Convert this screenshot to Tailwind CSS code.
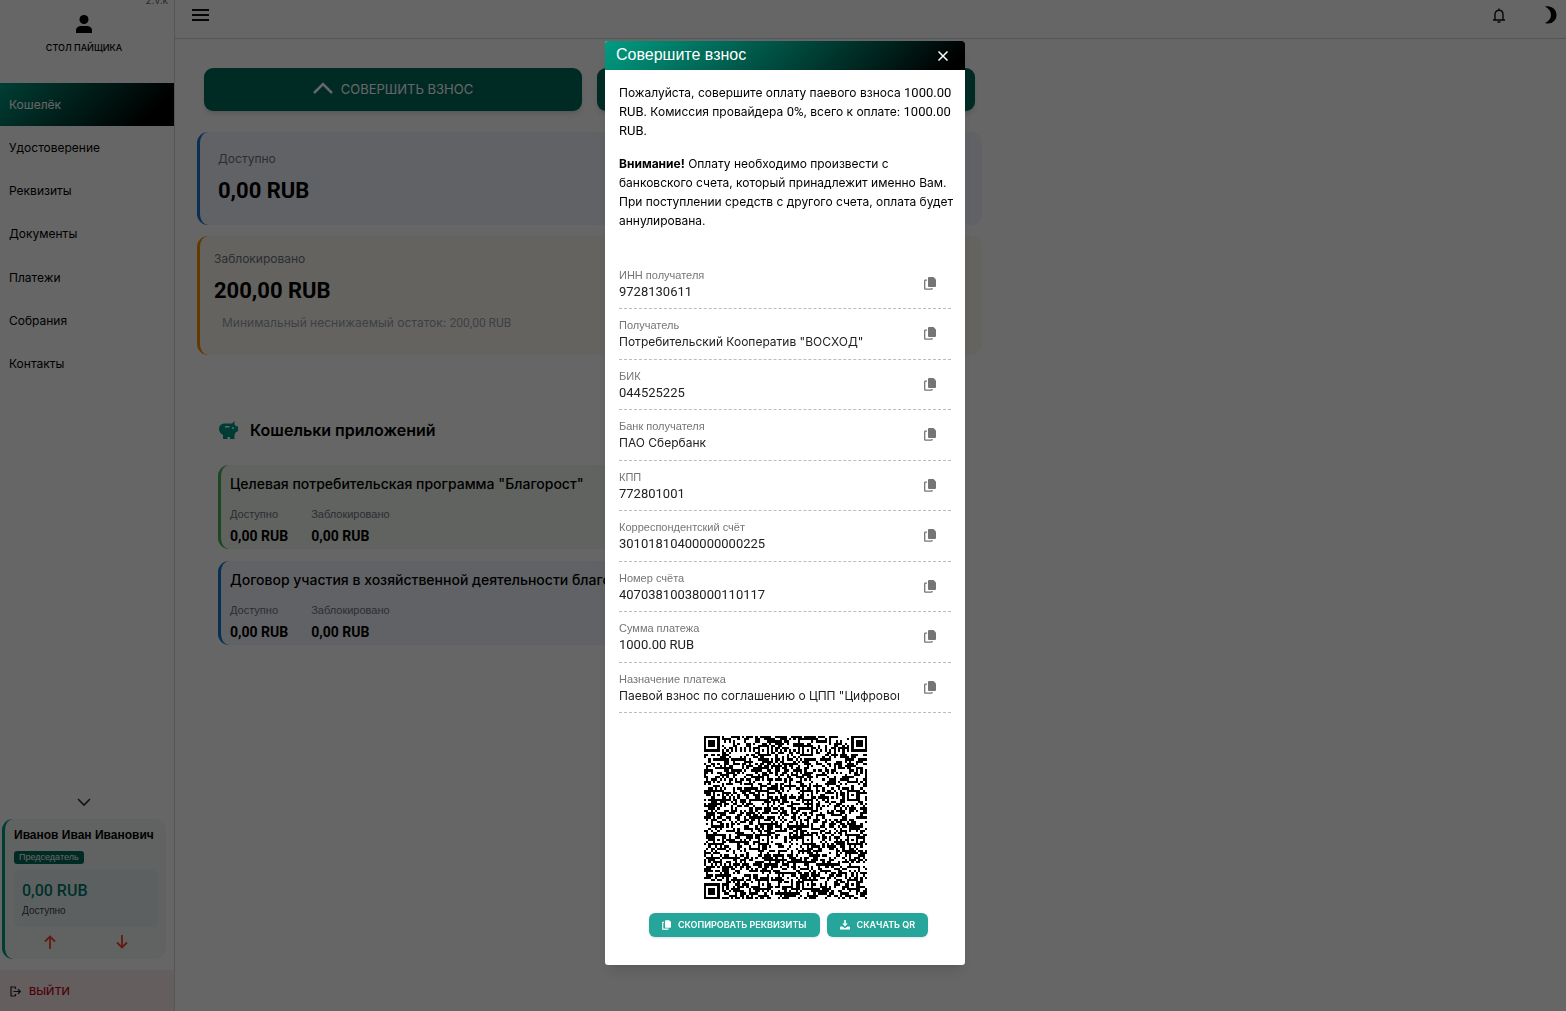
<!DOCTYPE html>
<html lang="ru">

<head>
  <meta charset="UTF-8" />
  <meta name="viewport" content="width=device-width, initial-scale=1.0" />
  <script src="https://cdn.jsdelivr.net/npm/@tailwindcss/browser@4"></script>
  <title>Стол пайщика — Кошелёк</title>
</head>

<body class="font-[Inter,'Liberation_Sans',sans-serif] text-black bg-white">
  <div class="flex h-screen overflow-hidden">
    <!-- Sidebar -->
    <aside class="relative w-[175px] shrink-0 flex flex-col border-r border-gray-300">
      <span class="absolute right-1.5 -top-1.5 text-[10px] leading-3 text-gray-500">2.v.k</span>
      <div class="flex flex-col items-center pt-[15px] h-[83px] pr-1.5">
        <svg viewBox="0 0 16 18" class="w-4 h-[18px]" fill="currentColor">
          <circle cx="8" cy="4.5" r="4.5" />
          <path d="M0 18v-2.5C0 12.500 2.500 11 5 11h6c2.500 0 5 1.500 5 4.500V18z" />
        </svg>
        <h1 class="mt-2 text-[9px] leading-3.5 font-medium">СТОЛ ПАЙЩИКА</h1>
      </div>
      <nav class="flex flex-col text-[12px]">
        <a href="#" class="h-[43px] px-[9px] flex items-center text-white bg-linear-[135deg,#009c82,#000_85%]">Кошелёк</a>
        <a href="#" class="h-[43px] px-[9px] flex items-center">Удостоверение</a>
        <a href="#" class="h-[43px] px-[9px] flex items-center">Реквизиты</a>
        <a href="#" class="h-11 px-[9px] flex items-center">Документы</a>
        <a href="#" class="h-[43px] px-[9px] flex items-center">Платежи</a>
        <a href="#" class="h-[43px] px-[9px] flex items-center">Собрания</a>
        <a href="#" class="h-[43px] px-[9px] flex items-center">Контакты</a>
      </nav>
      <div class="mt-auto flex flex-col">
        <button class="self-center mr-1.5 mb-3" aria-label="Свернуть">
          <svg viewBox="0 0 14 9" class="w-3.5 h-[9px]" fill="none" stroke="#333" stroke-width="1.700">
            <path d="M1 1l6 6 6-6" />
          </svg>
        </button>
        <section class="ml-0.5 mr-2 h-[140px] pl-[9px] pr-2 pt-2 rounded-[11px] border-l-3 border-[#009c82] bg-[#f2f7f6]">
          <h2 class="font-['Liberation_Sans',sans-serif] text-[12px] leading-4 font-bold whitespace-nowrap">Иванов Иван Иванович</h2>
          <span class="block w-fit mt-2 px-[5px] rounded-[3px] bg-[#006b5a] font-['Liberation_Sans',sans-serif] text-white text-[9px] leading-[13px]">Председатель</span>
          <div class="mt-1.5 h-[57px] px-2 pt-[11px] rounded-md bg-[#e6f1f1]">
            <p class="font-[Roboto,sans-serif] text-[16px] leading-5 font-medium text-[#00796b]">0,00 RUB</p>
            <p class="mt-0.5 font-['Liberation_Sans',sans-serif] text-[10px] leading-4 text-gray-700">Доступно</p>
          </div>
          <div class="flex justify-around mt-2 text-[#f2452f]">
            <button aria-label="Внести">
              <svg viewBox="0 0 12 14" class="w-3 h-3.5" fill="none" stroke="currentColor" stroke-width="1.800">
                <path d="M6 14V1.500M1 6.500l5-5 5 5" />
              </svg>
            </button>
            <button aria-label="Вывести">
              <svg viewBox="0 0 12 14" class="w-3 h-3.5" fill="none" stroke="currentColor" stroke-width="1.800">
                <path d="M6 0v12.500M1 7.500l5 5 5-5" />
              </svg>
            </button>
          </div>
        </section>
        <button class="mt-[11px] h-[41px] px-2.5 pt-0.5 flex items-center gap-2 bg-[#faebea] text-[#c10015] text-[11px] font-medium">
          <svg viewBox="0 0 11 11" class="w-[11px] h-[11px]" fill="none" stroke="#222" stroke-width="1.200">
            <path d="M5.500 1H1v9h4.500M5.500 3V1M5.500 8v2M3.500 5.500H10M8 3.200l2.300 2.300L8 7.800" />
          </svg>
          ВЫЙТИ
        </button>
      </div>
    </aside>

    <div class="flex-1 min-w-0">
      <header class="h-[39px] pl-[17px] pr-2 pb-2 flex items-center border-b border-gray-300">
        <button aria-label="Меню">
          <svg viewBox="0 0 17 12" class="w-[17px] h-3" fill="#111">
            <path d="M0 0h17v2H0zM0 5h17v2H0zM0 10h17v2H0z" />
          </svg>
        </button>
        <button class="ml-auto mr-[38px]" aria-label="Уведомления">
          <svg viewBox="0 0 12 15" class="w-3.5 h-[15px]" fill="none" stroke="#111" stroke-width="1.400">
            <path d="M0 12h12M2 12V6.500C2 4 3.600 2.300 6 2.300S10 4 10 6.500V12M6 2.300V.5M4.500 14h3" />
          </svg>
        </button>
        <button aria-label="Тёмная тема">
          <svg viewBox="0 0 14 18" class="w-3.5 h-[18px]" fill="#000">
            <path d="M1 0.500c6-1.500 11.500 2.500 11.500 8.500S7 19 1 17C5 15 7 12.500 7 9S5 2.500 1 .5z" />
          </svg>
        </button>
      </header>

      <main class="max-w-[807px] pl-[22px] pt-[29px]">
        <div class="grid grid-cols-2 gap-[15px] px-[7px]">
          <button class="h-[43px] flex items-center justify-center gap-2 rounded-[9px] bg-[#006b5a] text-white text-[13px] shadow-md">
            <svg viewBox="0 0 20 12" class="w-5 h-3 mb-1" fill="none" stroke="currentColor" stroke-width="2.500">
              <path d="M1 11l9-9 9 9" />
            </svg>
            СОВЕРШИТЬ ВЗНОС
          </button>
          <button class="h-[43px] rounded-[9px] bg-[#006b5a] shadow-md" aria-label="Получить возврат"></button>
        </div>

        <section class="mt-[21px] h-[93px] pl-[18px] pt-[19px] rounded-[11px] border-l-3 border-[#1976d2] bg-[#f3f5fc]">
          <p class="text-[12px] leading-4 text-gray-500">Доступно</p>
          <p class="mt-2 font-[Roboto,sans-serif] text-[22px] leading-8 font-bold">0,00 RUB</p>
        </section>
        <section class="mt-[11px] h-[119px] pl-3.5 pt-[15px] rounded-[11px] border-l-3 border-[#fb8c00] bg-[#fcf8f0]">
          <p class="text-[12px] leading-4 text-gray-500">Заблокировано</p>
          <p class="mt-2 font-[Roboto,sans-serif] text-[22px] leading-8 font-bold">200,00 RUB</p>
          <p class="mt-2 ml-2 text-[12px] leading-4 text-gray-400">Минимальный неснижаемый остаток: <span class="font-[Roboto]">200,00 RUB</span></p>
        </section>

        <h2 class="mt-[63px] ml-[22px] flex items-center gap-3 text-[16px] leading-6 font-semibold">
          <svg viewBox="0 0 19 18" class="w-[19px] h-[18px]" fill="#009688">
            <path d="M13 2.500 15.500 0v3.300l1.500 2h2v5l-2 .8-1.500 2.600V18H11v-2H8.500v2H4v-4C1.500 12.500 0 10.500 0 8c0-3.300 2.500-5.500 6-5.500z" />
            <path d="M6 5h4.500v1.500H6z" fill="#fff" />
            <circle cx="14" cy="7" r="1" fill="#fff" />
          </svg>
          Кошельки приложений
        </h2>
        <div class="mt-[23px] mx-[21px] space-y-3">
          <section class="h-[84px] pl-[9px] pt-2.5 rounded-[11px] border-l-3 border-[#4caf50] bg-[#f3f7f1]">
            <h3 class="text-[14px] leading-[18px] font-medium">Целевая потребительская программа "Благорост"</h3>
            <dl class="mt-3 flex gap-[23px]">
              <div>
                <dt class="font-['Liberation_Sans',sans-serif] text-[11px] leading-[18px] text-gray-500">Доступно</dt>
                <dd class="mt-1 font-[Roboto,sans-serif] text-[14px] leading-[18px] font-bold">0,00 RUB</dd>
              </div>
              <div>
                <dt class="font-['Liberation_Sans',sans-serif] text-[11px] leading-[18px] text-gray-500">Заблокировано</dt>
                <dd class="mt-1 font-[Roboto,sans-serif] text-[14px] leading-[18px] font-bold">0,00 RUB</dd>
              </div>
            </dl>
          </section>
          <section class="h-[84px] pl-[9px] pt-2.5 rounded-[11px] border-l-3 border-[#1976d2] bg-[#f3f5fc]">
            <h3 class="text-[14px] leading-[18px] font-medium">Договор участия в хозяйственной деятельности благорост</h3>
            <dl class="mt-3 flex gap-[23px]">
              <div>
                <dt class="font-['Liberation_Sans',sans-serif] text-[11px] leading-[18px] text-gray-500">Доступно</dt>
                <dd class="mt-1 font-[Roboto,sans-serif] text-[14px] leading-[18px] font-bold">0,00 RUB</dd>
              </div>
              <div>
                <dt class="font-['Liberation_Sans',sans-serif] text-[11px] leading-[18px] text-gray-500">Заблокировано</dt>
                <dd class="mt-1 font-[Roboto,sans-serif] text-[14px] leading-[18px] font-bold">0,00 RUB</dd>
              </div>
            </dl>
          </section>
        </div>
      </main>
    </div>
  </div>

  <!-- Payment dialog -->
  <div class="fixed inset-0 flex items-start justify-center pt-[41px] pl-1 bg-black/60">
    <div role="dialog" aria-labelledby="dialog-title" class="w-[360px] pb-7 rounded-[3px] overflow-hidden bg-white shadow-lg">
      <header class="h-[29px] pl-[11px] pr-4 flex items-center justify-between text-white bg-linear-[135deg,#009c82,#000_95%]">
        <h2 id="dialog-title" class="pb-0.5 font-['Liberation_Sans',sans-serif] text-[16px]">Совершите взнос</h2>
        <button aria-label="Закрыть">
          <svg viewBox="0 0 12 12" class="w-3 h-3" fill="none" stroke="currentColor" stroke-width="1.500">
            <path d="M1.500 1.500l9 9M10.500 1.500l-9 9" />
          </svg>
        </button>
      </header>
      <div class="px-3.5 pt-[13px] text-[12px] leading-[19px]">
        <div class="-mr-2">
          <p>Пожалуйста, совершите оплату паевого взноса <span class="font-[Roboto] text-[13px]">1000.00 RUB.</span> Комиссия провайдера <span class="font-[Roboto] text-[13px]">0%</span>, всего к оплате: <span class="font-[Roboto] text-[13px]">1000.00 RUB.</span></p>
          <p class="mt-3.5"><b>Внимание!</b> Оплату необходимо произвести с банковского счета, который принадлежит именно Вам. При поступлении средств с другого счета, оплата будет аннулирована.</p>
        </div>
        <div id="fields" class="mt-[29px] grid auto-rows-fr min-h-[454px]"></div>
      </div>
      <canvas id="qr" width="163" height="163" class="block mx-auto mt-[23px]" role="img" aria-label="QR-код для оплаты"></canvas>
      <div class="mt-3.5 flex justify-center gap-[7px] pl-[7px] text-[9px] font-semibold text-white">
        <button class="h-6 px-[13px] flex items-center gap-[7px] rounded-md bg-[#26a69a] shadow">
          <svg viewBox="0 0 12 13" class="w-[9px] h-2.5">
            <path d="M5 0h4.500L12 2.500V9a1 1 0 0 1-1 1H5a1 1 0 0 1-1-1V1a1 1 0 0 1 1-1z" fill="currentColor" />
            <path d="M2.500 3H1v9h7v-1" fill="none" stroke="currentColor" stroke-width="1.500" />
          </svg>
          СКОПИРОВАТЬ РЕКВИЗИТЫ
        </button>
        <button class="h-6 px-[13px] flex items-center gap-[7px] rounded-md bg-[#26a69a] shadow">
          <svg viewBox="0 0 10 10" class="w-2.5 h-2.5" fill="currentColor">
            <path d="M4.200 0h1.600v3.500h2L5 6.500l-2.800-3h2zM.5 6.500h1.800L5 8.200l2.700-1.700h1.800l.5.5v2.500H0V7z" />
          </svg>
          СКАЧАТЬ QR
        </button>
      </div>
    </div>
  </div>

  <template id="field">
    <div class="flex items-start pt-2 border-b border-dashed border-gray-400/70">
      <div class="w-[280px]">
        <label class="block font-['Liberation_Sans',sans-serif] text-[11px] leading-4 text-[#757575]"></label>
        <input readonly class="block w-full h-[17px] text-[12px] text-[#212121] outline-none" />
      </div>
      <button class="mt-2.5 ml-[25px] text-[#757575]" aria-label="Скопировать">
        <svg viewBox="0 0 12 13" class="w-3 h-[13px]">
          <path d="M5 0h4.500L12 2.500V9a1 1 0 0 1-1 1H5a1 1 0 0 1-1-1V1a1 1 0 0 1 1-1z" fill="currentColor" />
          <path d="M3 3.200H1.200a.5.500 0 0 0-.5.5v8a.5.500 0 0 0 .5.500h6.300a.5.500 0 0 0 .5-.5v-.7" fill="none" stroke="currentColor" stroke-width="1.300" />
        </svg>
      </button>
    </div>
  </template>

  <script>
    const details = [
      ["ИНН получателя", "9728130611"],
      ["Получатель", 'Потребительский Кооператив "ВОСХОД"'],
      ["БИК", "044525225"],
      ["Банк получателя", "ПАО Сбербанк"],
      ["КПП", "772801001"],
      ["Корреспондентский счёт", "30101810400000000225"],
      ["Номер счёта", "40703810038000110117"],
      ["Сумма платежа", "1000.00 RUB"],
      ["Назначение платежа", 'Паевой взнос по соглашению о ЦПП "Цифровой Кооператив"'],
    ];

    const template = document.getElementById("field");
    details.forEach(([name, value], i) => {
      const row = template.content.cloneNode(true);
      const label = row.querySelector("label");
      const input = row.querySelector("input");
      label.textContent = name;
      label.htmlFor = input.id = "detail-" + i;
      input.value = value;
      if (/^\d/.test(value)) {
        input.classList.add("font-[Roboto]", "text-[13px]");
        input.classList.remove("text-[12px]");
      }
      document.getElementById("fields").appendChild(row);
    });

    // QR, version 14: 73 x 73 modules
    function drawQr() {
      const n = 73;
      const canvas = document.getElementById("qr");
      const ctx = canvas.getContext("2d");
      const size = canvas.width / n;
      let seed = 20417;
      const bit = () => {
        seed = (seed * 1103515245 + 12345) % 2147483648;
        return (seed >> 16) & 1;
      };
      const m = Array.from({ length: n }, () => Array.from({ length: n }, bit));

      for (let i = 8; i < n - 8; i++) {
        m[6][i] = m[i][6] = (i + 1) % 2;
      }

      // concentric square around (cx, cy); rings listed from the centre out
      const square = (cx, cy, rings) => {
        const r = rings.length - 1;
        for (let y = -r; y <= r; y++) {
          for (let x = -r; x <= r; x++) {
            if (m[cy + y] && m[cy + y][cx + x] !== undefined) {
              m[cy + y][cx + x] = rings[Math.max(Math.abs(x), Math.abs(y))];
            }
          }
        }
      };
      const marks = [6, 26, 46, 66];
      marks.forEach((y) => marks.forEach((x) => {
        const corner = (x === 6 && y === 6) || (x === 66 && y === 6) || (x === 6 && y === 66);
        if (!corner) square(x, y, [1, 0, 1]);
      }));
      [[3, 3], [n - 4, 3], [3, n - 4]].forEach(([x, y]) => square(x, y, [1, 1, 0, 1, 0]));

      m.forEach((row, y) => row.forEach((on, x) => {
        if (!on) return;
        const left = Math.round(x * size);
        const top = Math.round(y * size);
        ctx.fillRect(left, top, Math.round((x + 1) * size) - left, Math.round((y + 1) * size) - top);
      }));
    }

    drawQr();
  </script>
</body>

</html>
